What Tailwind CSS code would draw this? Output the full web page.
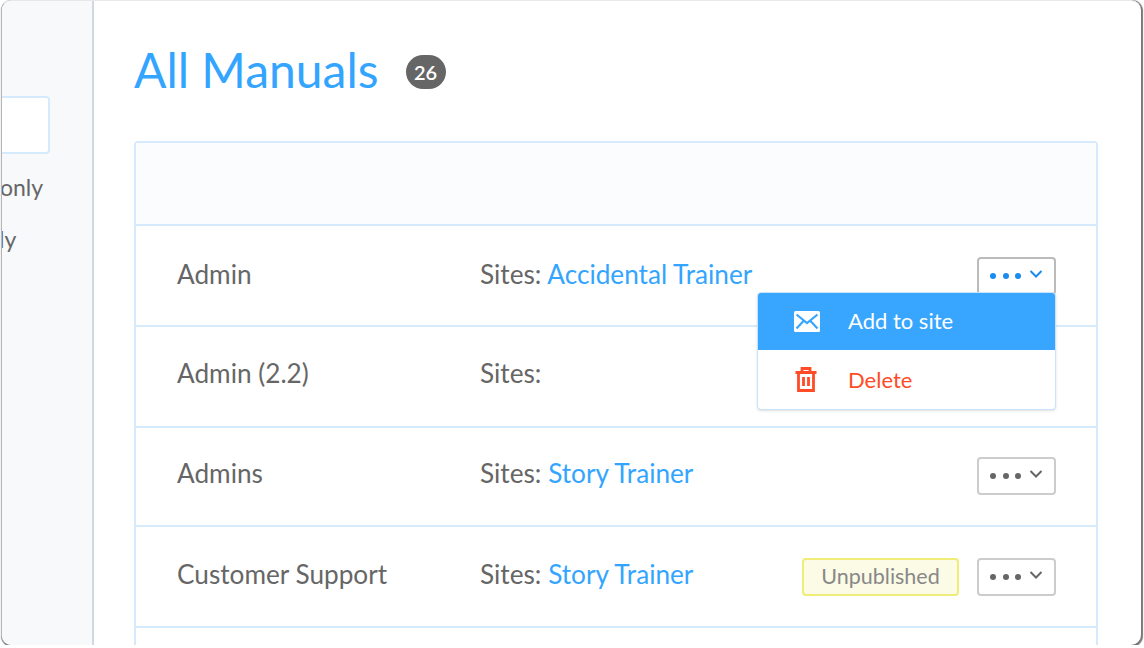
<!DOCTYPE html>
<html lang="en">
<head>
  <meta charset="UTF-8" />
  <title>All Manuals</title>
  <script src="https://cdn.jsdelivr.net/npm/@tailwindcss/browser@4"></script>
</head>
<body class="bg-white font-['Lato',sans-serif] text-[#666]">
  <div class="ml-px w-[1140px] h-[645px] flex overflow-hidden rounded-[10px] bg-white border-t border-t-[#e8e8e8] border-l border-l-[#b5b5b5] shadow-[1px_1px_1px_1px_#777]">
    <!-- Sidebar, cut off by the window edge -->
    <aside class="w-[92px] shrink-0 bg-[#f8f9fb] border-r-2 border-r-[#cfd8e3] overflow-hidden">
      <div class="mt-[95px] w-[48px] h-[58px] bg-white border-2 border-l-0 border-[#d6eafd] rounded-r"></div>
      <p class="mt-[19px] -ml-[2px] text-[23px] leading-7 whitespace-nowrap">only</p>
      <p class="mt-[24px] -ml-[3px] text-[23px] leading-7 whitespace-nowrap">ly</p>
    </aside>

    <main class="flex-1 pl-[40px] pr-[43px]">
      <div class="flex items-center h-[140px]">
        <h1 class="mb-[2px] text-[48px] leading-none text-[#33a5ff]">All Manuals</h1>
        <span class="mt-[2px] ml-[27px] w-10 h-[34px] rounded-full bg-[#666] text-white text-[20px] font-semibold flex items-center justify-center">26</span>
      </div>

      <div class="border-2 border-b-0 border-[#d6eafd] rounded-t">
        <div class="h-[81px] bg-[#fafcfe]"></div>

        <div class="h-[101px] border-t-2 border-[#d6eafd] flex items-center pl-[41px] pr-[40px] text-[26.200px]">
          <span class="w-[303px] mb-[2px]">Admin</span>
          <span class="mb-[2px]">Sites: <a class="text-[#33a5ff]">Accidental Trainer</a></span>
          <div class="relative ml-auto">
            <button class="w-[79px] h-[38px] border-2 border-[#bbb] rounded flex items-center justify-center gap-[8px] text-[#1a8cf0]">
              <span class="flex gap-[6.5px]"><i class="size-[6px] rounded-full bg-current"></i><i class="size-[6px] rounded-full bg-current"></i><i class="size-[6px] rounded-full bg-current"></i></span>
              <svg class="size-[14px] -mt-1" viewBox="0 0 14 14" fill="none" stroke="currentColor" stroke-width="2"><path d="M1.500 4l5.500 5.500 5.500-5.500"/></svg>
            </button>
            <div class="absolute right-0 top-[35px] w-[299px] h-[118px] z-10 bg-white border border-[#c8e3fb] rounded shadow-sm overflow-hidden">
              <div class="h-[57px] bg-[#38a6ff] text-white flex items-center text-[22px]">
                <svg class="ml-[36px] w-[26px] h-[21px]" viewBox="0 0 26 21"><rect width="26" height="21" rx="1.500" fill="#fff"/><path d="M2.500 3.500L13 12l10.500-8.500M2.500 17.500l7-7.500M23.500 17.500l-7-7.500" fill="none" stroke="#38a6ff" stroke-width="2.200"/></svg>
                <span class="ml-[28px] mb-[2px]">Add to site</span>
              </div>
              <div class="h-[59px] text-[#ff4b26] flex items-center text-[22px]">
                <svg class="ml-[37px] w-[22px] h-[25px]" viewBox="0 0 22 25" fill="none" stroke="currentColor" stroke-width="2.800"><path d="M0.500 5.500h21M7 5V1.500h8V5M3.500 5.500V23.500h15V5.500M8.500 10v9M13.500 10v9"/></svg>
                <span class="ml-[31px]">Delete</span>
              </div>
            </div>
          </div>
        </div>

        <div class="h-[101px] border-t-2 border-[#d6eafd] flex items-center pl-[41px] pr-[40px] pb-[6px] text-[26.200px]">
          <span class="w-[303px]">Admin (2.2)</span>
          <span>Sites:</span>
        </div>

        <div class="h-[99px] border-t-2 border-[#d6eafd] flex items-center pl-[41px] pr-[40px] pb-[1px] text-[26.200px]">
          <span class="w-[303px] mb-[4px]">Admins</span>
          <span class="mb-[4px]">Sites: <a class="text-[#33a5ff]">Story Trainer</a></span>
          <button class="ml-auto w-[79px] h-[38px] border-2 border-[#ccc] rounded flex items-center justify-center gap-[8px] text-[#666]">
            <span class="flex gap-[6.5px]"><i class="size-[6px] rounded-full bg-current"></i><i class="size-[6px] rounded-full bg-current"></i><i class="size-[6px] rounded-full bg-current"></i></span>
            <svg class="size-[14px] -mt-1" viewBox="0 0 14 14" fill="none" stroke="currentColor" stroke-width="2"><path d="M1.500 4l5.500 5.500 5.500-5.500"/></svg>
          </button>
        </div>

        <div class="h-[101px] border-t-2 border-[#d6eafd] flex items-center pl-[41px] pr-[40px] text-[26.200px]">
          <span class="w-[303px] mb-[3px]">Customer Support</span>
          <span class="mb-[3px]">Sites: <a class="text-[#33a5ff]">Story Trainer</a></span>
          <span class="ml-auto w-[157px] h-[38px] bg-[#fbfbe6] border-2 border-[#f0ec78] rounded text-[21.500px] text-[#888] flex items-center justify-center">Unpublished</span>
          <button class="ml-[18px] w-[79px] h-[38px] border-2 border-[#ccc] rounded flex items-center justify-center gap-[8px] text-[#666]">
            <span class="flex gap-[6.5px]"><i class="size-[6px] rounded-full bg-current"></i><i class="size-[6px] rounded-full bg-current"></i><i class="size-[6px] rounded-full bg-current"></i></span>
            <svg class="size-[14px] -mt-1" viewBox="0 0 14 14" fill="none" stroke="currentColor" stroke-width="2"><path d="M1.500 4l5.500 5.500 5.500-5.500"/></svg>
          </button>
        </div>

        <div class="h-[30px] border-t-2 border-[#d6eafd]"></div>
      </div>
    </main>
  </div>
</body>
</html>
